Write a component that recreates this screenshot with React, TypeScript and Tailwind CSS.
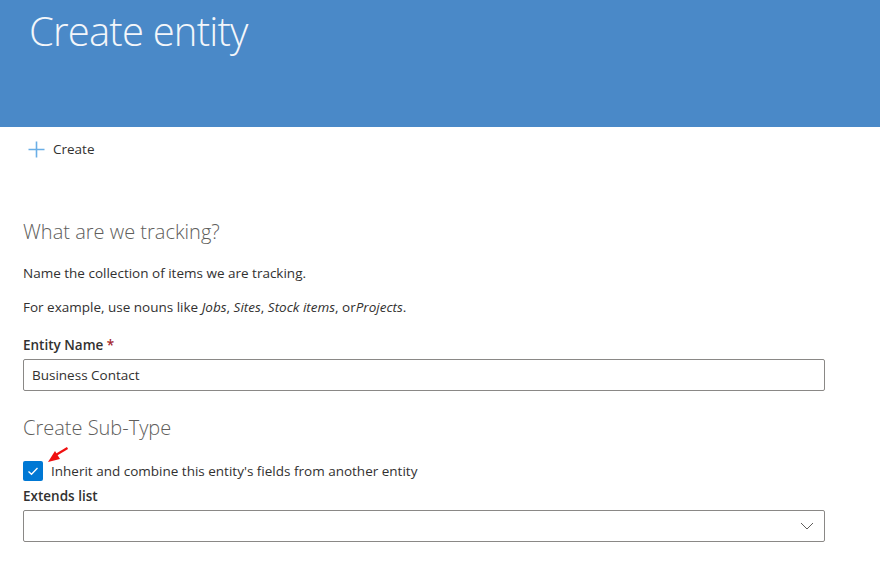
import { useState } from 'react';

const font = { fontFamily: '"Segoe UI", "Open Sans", "Noto Sans", sans-serif' };

export default function App() {
  const [name, setName] = useState('Business Contact');
  const [inherit, setInherit] = useState(true);

  return (
    <div className="min-h-[579px] w-[880px] bg-white text-[#323130]" style={font}>
      <header className="h-[127px] bg-[#4a89c8] px-[29px] pt-[3px]">
        <h1 className="text-[40px] font-light leading-[56px] tracking-[-0.8px] text-[#f3f6fa]">Create entity</h1>
      </header>

      <div className="flex h-[44px] items-center px-[28px]">
        <button type="button" className="flex items-center gap-[8px] text-[13.5px] text-[#323130]">
          <svg width="17" height="17" viewBox="0 0 17 17">
            <path d="M8.5 0.5 V16.5 M0.5 8.5 H16.5" stroke="#6aaee6" strokeWidth="1.6" fill="none" />
          </svg>
          Create
        </button>
      </div>

      <main className="px-[23px] pt-[47px]">
        <h2 className="text-[20px] font-light leading-[28px] text-[#605e5c]">What are we tracking?</h2>
        <p className="mt-[17px] text-[13.5px] leading-[20px]">Name the collection of items we are tracking.</p>
        <p className="mt-[14px] text-[13.5px] leading-[20px]">
          For example, use nouns like <i>Jobs</i>, <i>Sites</i>, <i>Stock items</i>, or<i>Projects</i>.
        </p>

        <label className="mt-[18px] block text-[13.5px] font-semibold leading-[20px]">
          Entity Name <span className="text-[#a4262c]">*</span>
        </label>
        <div className="mt-[4px] flex h-[32px] w-[802px] items-center rounded-[2px] border border-[#8a8886] px-[8px]">
          <input
            value={name}
            onChange={(e) => setName(e.target.value)}
            className="w-full bg-transparent text-[13.5px] text-[#323130] outline-none"
            style={font}
          />
        </div>

        <h2 className="mt-[23px] text-[20px] font-light leading-[28px] text-[#605e5c]">Create Sub-Type</h2>

        <div className="relative mt-[19px] flex items-center gap-[8px]">
          <button
            type="button"
            onClick={() => setInherit(!inherit)}
            className={
              inherit
                ? 'flex h-[20px] w-[20px] items-center justify-center rounded-[2px] bg-[#0078d4]'
                : 'flex h-[20px] w-[20px] items-center justify-center rounded-[2px] border border-[#323130] bg-white'
            }
          >
            {inherit && (
              <svg width="12" height="12" viewBox="0 0 12 12">
                <path d="M1.5 6.5 L4.5 9.3 L10.5 3" stroke="white" strokeWidth="1.3" fill="none" />
              </svg>
            )}
          </button>
          <span className="text-[13.5px] leading-[20px] text-[#323130]">
            Inherit and combine this entity's fields from another entity
          </span>
          <svg className="absolute left-[24px] top-[-14px]" width="22" height="16" viewBox="0 0 22 16">
            <path d="M20.5 1 L8 8.5" stroke="#f01010" strokeWidth="2.2" fill="none" />
            <path d="M1 15 L13 12 L8 4 Z" fill="#f01010" />
          </svg>
        </div>

        <label className="mt-[5px] block text-[13.5px] font-semibold leading-[20px]">Extends list</label>
        <div className="mt-[4px] flex h-[32px] w-[802px] items-center justify-end rounded-[2px] border border-[#8a8886] pr-[10px]">
          <svg width="14" height="8" viewBox="0 0 14 8">
            <path d="M1 1 L7 7 L13 1" stroke="#605e5c" strokeWidth="1" fill="none" />
          </svg>
        </div>
      </main>
    </div>
  );
}
